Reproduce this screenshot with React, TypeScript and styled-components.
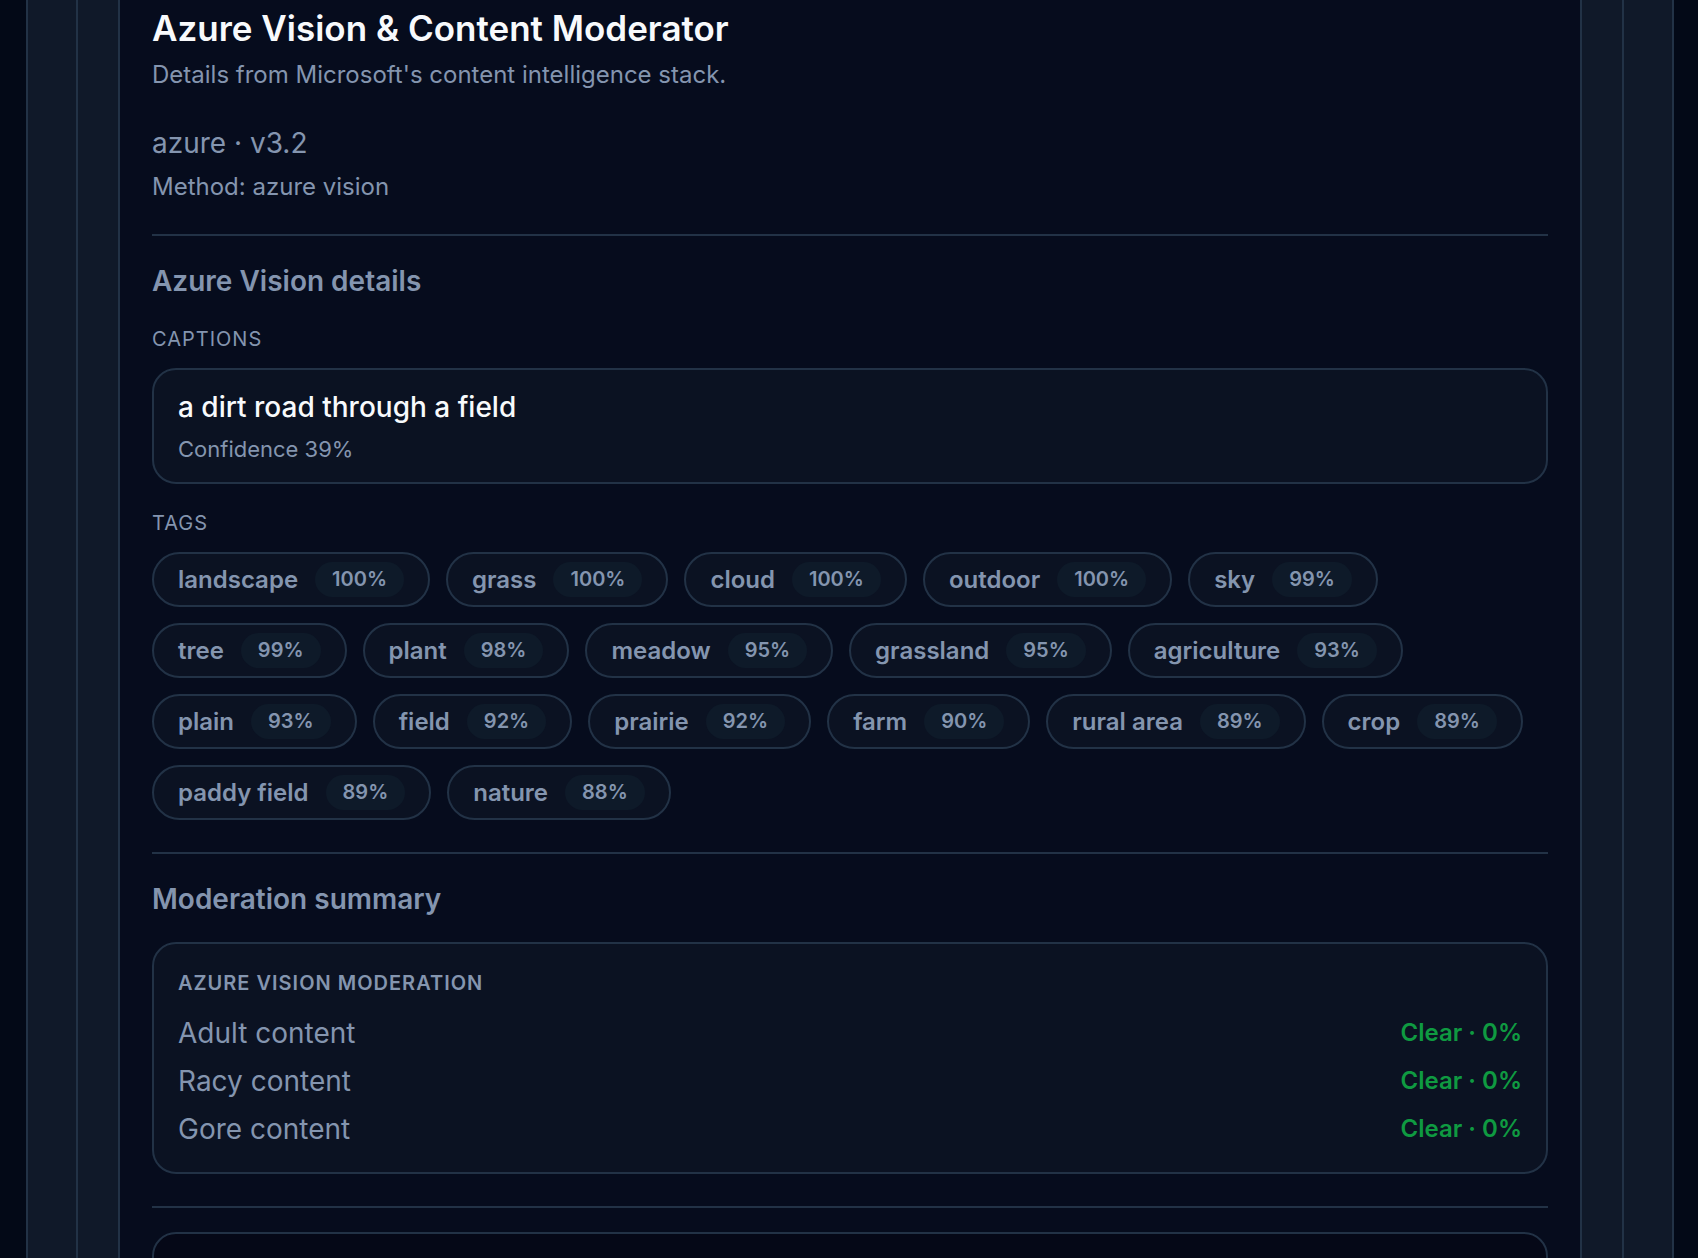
import React from "react";
import styled, { createGlobalStyle } from "styled-components";

const line = "#223246";
const muted = "#8495af";

const GlobalStyle = createGlobalStyle`
  *, *::before, *::after { box-sizing: border-box; }
  body {
    margin: 0;
    background: #030917;
    color: ${muted};
    font-family: Inter, "Liberation Sans", sans-serif;
    font-size: 28px;
    line-height: 40px;
    -webkit-font-smoothing: antialiased;
  }
  h1, h2, h3, h4, p, ul, dl, dd { margin: 0; padding: 0; }
  ul { list-style: none; }
`;

const Page = styled.main`
  height: 100vh;
  overflow: hidden;
  padding: 0 24px 0 26px;
`;

const Shell = styled.div`
  min-height: 100%;
  padding: 0 48px;
  background: #101929;
  border: solid ${line};
  border-width: 0 2px;
`;

const Panel = styled.div`
  padding: 0 40px;
  border: solid ${line};
  border-width: 0 2px;
`;

const Report = styled.article`
  display: flex;
  flex-direction: column;
  padding: 4px 32px 32px;
  background: #060c1d;
  border: solid ${line};
  border-width: 0 2px;
`;

const Title = styled.h1`
  color: #f8fafc;
  font-size: 35px;
  line-height: 48px;
  font-weight: 600;
`;

const Subtitle = styled.p`
  margin-top: 6px;
  font-size: 24px;
  line-height: 34px;
`;

const Source = styled.div`
  margin-top: 31px;
`;

const Method = styled.p`
  margin-top: 9px;
  font-size: 24px;
  line-height: 30px;
`;

const Section = styled.section`
  margin-top: 32px;
  padding-top: 24px;
  border-top: 2px solid ${line};
`;

const Heading = styled.h2`
  font-size: 28px;
  line-height: 42px;
  font-weight: 600;
`;

const Label = styled.h3<{ $strong?: boolean }>`
  font-size: 20px;
  line-height: 30px;
  font-weight: ${(p) => (p.$strong ? 600 : 400)};
  letter-spacing: 0.05em;
  text-transform: uppercase;
`;

const Group = styled.div`
  display: grid;
  gap: 14px;
  margin-top: 24px;

  ${Heading} + & {
    margin-top: 22px;
  }
`;

const Card = styled.div`
  padding: 16px 24px;
  background: #0b1222;
  border: 2px solid ${line};
  border-radius: 24px;
`;

const Caption = styled.p`
  color: #f8fafc;
  font-weight: 500;
  line-height: 42px;
`;

const Confidence = styled.p`
  margin-top: 4px;
  font-size: 22px;
  line-height: 34px;
`;

const TagList = styled.ul`
  display: flex;
  flex-wrap: wrap;
  gap: 16px;
`;

const Tag = styled.li`
  display: inline-flex;
  align-items: center;
  gap: 17px;
  padding: 8px 24px;
  background: #0b1222;
  border: 2px solid ${line};
  border-radius: 28px;
  font-size: 24px;
  line-height: 35px;
  font-weight: 600;
`;

const Score = styled.span`
  padding: 0 17px;
  background: #0e1a29;
  border-radius: 18px;
  font-size: 20px;
`;

const Summary = styled(Card)`
  margin-top: 22px;
  padding: 24px 24px 22px;
`;

const Checks = styled.dl`
  display: grid;
  gap: 6px;
  margin-top: 14px;
  line-height: 42px;
`;

const Check = styled.div`
  display: flex;
  align-items: center;
  justify-content: space-between;
`;

const Verdict = styled.dd`
  color: #0f9a41;
  font-size: 24px;
  font-weight: 600;
`;

const NextCard = styled(Card)`
  min-height: 120px;
  background: #050817;
`;

const tags: [string, number][] = [
  ["landscape", 100], ["grass", 100], ["cloud", 100], ["outdoor", 100], ["sky", 99],
  ["tree", 99], ["plant", 98], ["meadow", 95], ["grassland", 95], ["agriculture", 93],
  ["plain", 93], ["field", 92], ["prairie", 92], ["farm", 90], ["rural area", 89],
  ["crop", 89], ["paddy field", 89], ["nature", 88],
];

const checks = ["Adult content", "Racy content", "Gore content"];

export default function App() {
  return (
    <>
      <GlobalStyle />
      <Page>
        <Shell>
          <Panel>
            <Report>
              <Title>Azure Vision &amp; Content Moderator</Title>
              <Subtitle>Details from Microsoft's content intelligence stack.</Subtitle>
              <Source>
                <p>azure · v3.2</p>
                <Method>Method: azure vision</Method>
              </Source>

              <Section>
                <Heading>Azure Vision details</Heading>
                <Group>
                  <Label>Captions</Label>
                  <Card>
                    <Caption>a dirt road through a field</Caption>
                    <Confidence>Confidence 39%</Confidence>
                  </Card>
                </Group>
                <Group>
                  <Label>Tags</Label>
                  <TagList>
                    {tags.map(([name, score]) => (
                      <Tag key={name}>
                        {name}
                        <Score>{score}%</Score>
                      </Tag>
                    ))}
                  </TagList>
                </Group>
              </Section>

              <Section>
                <Heading>Moderation summary</Heading>
                <Summary>
                  <Label $strong>Azure Vision moderation</Label>
                  <Checks>
                    {checks.map((name) => (
                      <Check key={name}>
                        <dt>{name}</dt>
                        <Verdict>Clear · 0%</Verdict>
                      </Check>
                    ))}
                  </Checks>
                </Summary>
              </Section>

              <Section>
                <NextCard />
              </Section>
            </Report>
          </Panel>
        </Shell>
      </Page>
    </>
  );
}
